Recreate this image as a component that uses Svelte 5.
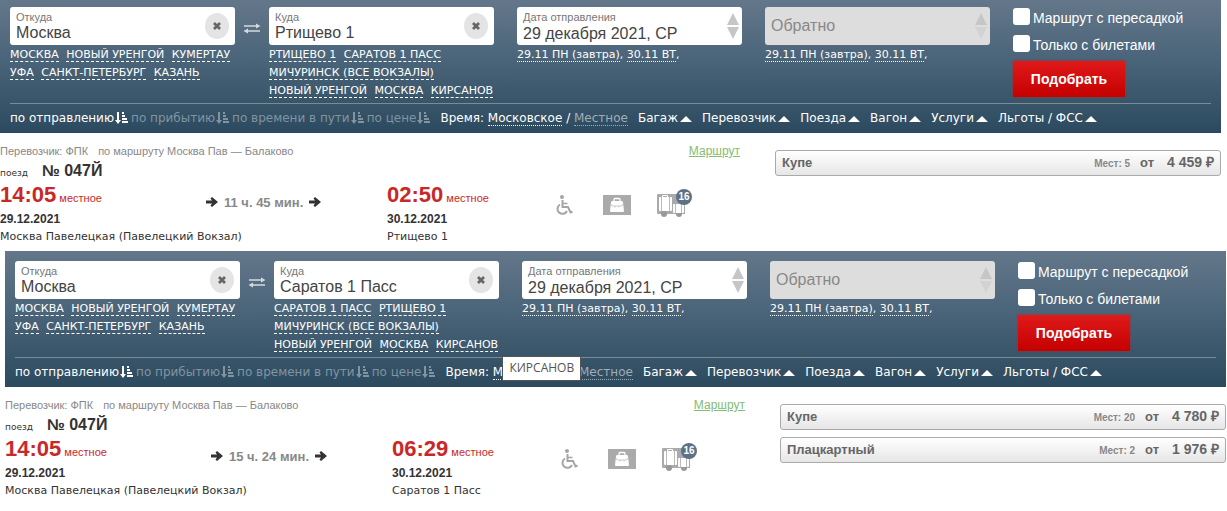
<script>
  const searches = [
    {
      id: 'rtishchevo',
      to: 'Ртищево 1',
      toHints: ['РТИЩЕВО 1', 'САРАТОВ 1 ПАСС', 'МИЧУРИНСК (ВСЕ ВОКЗАЛЫ)', 'НОВЫЙ УРЕНГОЙ', 'МОСКВА', 'КИРСАНОВ'],
      tooltip: '',
      duration: '11 ч. 45 мин.',
      arrival: '02:50',
      fares: [{ name: 'Купе', seats: 5, price: '4 459' }]
    },
    {
      id: 'saratov',
      to: 'Саратов 1 Пасс',
      toHints: ['САРАТОВ 1 ПАСС', 'РТИЩЕВО 1', 'МИЧУРИНСК (ВСЕ ВОКЗАЛЫ)', 'НОВЫЙ УРЕНГОЙ', 'МОСКВА', 'КИРСАНОВ'],
      tooltip: 'КИРСАНОВ',
      duration: '15 ч. 24 мин.',
      arrival: '06:29',
      fares: [
        { name: 'Купе', seats: 20, price: '4 780' },
        { name: 'Плацкартный', seats: 2, price: '1 976' }
      ]
    }
  ];
  const fromHints = ['МОСКВА', 'НОВЫЙ УРЕНГОЙ', 'КУМЕРТАУ', 'УФА', 'САНКТ-ПЕТЕРБУРГ', 'КАЗАНЬ'];
  const sorts = ['по отправлению', 'по прибытию', 'по времени в пути', 'по цене'];
  const filters = ['Багаж', 'Перевозчик', 'Поезда', 'Вагон', 'Услуги', 'Льготы / ФСС'];
</script>

{#snippet cityField(id, label, value, hints)}
  <div class="city">
    <div class="field">
      <label for={id}>{label}</label>
      <input type="text" {id} {value} />
      <button type="button" class="clear" aria-label="Очистить">
        <svg width="10" height="10" viewBox="0 0 10 10"><path d="M2 2L8 8M8 2L2 8" stroke="#666" stroke-width="2.8" /></svg>
      </button>
    </div>
    <div class="hints cities">
      {#each hints as hint}<a href="#city">{hint}</a>{' '}{/each}
    </div>
  </div>
{/snippet}

{#snippet dateHints()}
  <div class="hints dates"><a href="#date">29.11 ПН (завтра)</a>, <a href="#date">30.11 ВТ</a>,</div>
{/snippet}

{#snippet spinner()}
  <span class="spinner">
    <button type="button" aria-label="Следующий день"><svg width="12" height="12" viewBox="0 0 12 12"><path d="M6 0L12 12H0Z" fill="currentColor" /></svg></button>
    <button type="button" aria-label="Предыдущий день"><svg width="12" height="12" viewBox="0 0 12 12"><path d="M0 0H12L6 12Z" fill="currentColor" /></svg></button>
  </span>
{/snippet}

{#snippet arrow()}
  <svg class="arrow" width="12" height="10" viewBox="0 0 12 10"><path d="M0 3.500H6L4.500 1.500L6 0L12 5L6 10L4.500 8.500L6 6.500H0Z" fill="#333" /></svg>
{/snippet}

<main>
  {#each searches as s, i}
    <section class:shifted={i > 0}>
      <form class="panel" onsubmit={(e) => e.preventDefault()}>
        <div class="fields">
          <div class="route">
            {@render cityField(`${s.id}-from`, 'Откуда', 'Москва', fromHints)}
            <button type="button" class="swap" aria-label="Поменять местами">
              <svg width="18" height="11" viewBox="0 0 18 11" fill="none" stroke="#d3dae0" stroke-width="1.300">
                <path d="M1 3H15M4 8H17" /><path d="M13 .5L17.500 3L13 5.500ZM5 5.500L.5 8L5 10.500Z" fill="#d3dae0" stroke="none" />
              </svg>
            </button>
            {@render cityField(`${s.id}-to`, 'Куда', s.to, s.toHints)}
          </div>
          <div>
            <div class="field date">
              <label for="{s.id}-date">Дата отправления</label>
              <input type="text" id="{s.id}-date" value="29 декабря 2021, СР" />
              {@render spinner()}
            </div>
            {@render dateHints()}
          </div>
          <div>
            <div class="field back">
              <input type="text" placeholder="Обратно" aria-label="Обратно" />
              {@render spinner()}
            </div>
            {@render dateHints()}
          </div>
          <div class="options">
            <label><input type="checkbox" />Маршрут с пересадкой</label>
            <label><input type="checkbox" />Только с билетами</label>
            <button class="submit">Подобрать</button>
          </div>
        </div>

        <div class="toolbar">
          <div class="sorts">
            {#each sorts as sort, n}
              <button type="button" class:active={n === 0}>{sort}<svg width="13" height="12" viewBox="0 0 13 12" fill="currentColor"><path d="M2 0H4V8H6L3 12L0 8H2ZM7 0H9V2H7ZM7 3H10V5H7ZM7 6H12V8H7ZM7 9H13V11H7Z" /></svg></button>
            {/each}
          </div>
          <div class="time">Время: <a href="#msk">Московское</a> / <a class="local" href="#local">Местное</a>
            {#if s.tooltip}<span class="tooltip">{s.tooltip}</span>{/if}
          </div>
          <div class="filters">
            {#each filters as filter}
              <button type="button">{filter}<svg width="12" height="8" viewBox="0 0 12 8"><path d="M6 2L12 8H0Z" fill="#fff" /></svg></button>
            {/each}
          </div>
        </div>
      </form>

      <article class="result">
        <div class="train">
          <div class="carrier">
            <span>Перевозчик: ФПК</span><span>по маршруту Москва Пав — Балаково</span>
            <a href="#route">Маршрут</a>
          </div>
          <div class="number"><small>поезд</small><b>№ 047Й</b></div>
          <div class="trip">
            <div class="stop">
              <div class="clock"><b>14:05</b> местное</div>
              <div class="day">29.12.2021</div>
              <div class="station">Москва Павелецкая (Павелецкий Вокзал)</div>
            </div>
            <div class="duration">{@render arrow()}{s.duration}{@render arrow()}</div>
            <div class="stop">
              <div class="clock"><b>{s.arrival}</b> местное</div>
              <div class="day">30.12.2021</div>
              <div class="station">{s.to}</div>
            </div>
            <div class="services">
              <svg width="18" height="22" viewBox="0 0 18 22" fill="none" stroke="#a5a5a5" stroke-width="2">
                <circle cx="7" cy="3" r="2" fill="#a5a5a5" stroke="none" />
                <path d="M7.500 6V13H13L15.500 18.500L17.500 17.500" /><path d="M8 9.500H12.500" stroke-width="1.500" />
                <path d="M5 10.500A5 5 0 1 0 12 17" />
              </svg>
              <svg width="28" height="20" viewBox="0 0 28 20">
                <path d="M0 0H28V20H0Z" fill="#aaa" />
                <path d="M11 7V4.500Q11 3.500 12 3.500H16Q17 3.500 17 4.500V7" fill="none" stroke="#fff" stroke-width="1.300" />
                <path d="M9 6H19Q20 6 20 7.500L21 16Q21 17 20 17H8Q7 17 7 16L8 7.500Q8 6 9 6Z" fill="#fff" />
                <path d="M8 9Q8 11 10 11H18Q20 11 20 9M12 11V12.500M16 11V12.500" fill="none" stroke="#bbb" stroke-width=".8" />
              </svg>
              <span class="luggage">
                <svg width="29" height="23" viewBox="0 0 29 23">
                  <path d="M1 0H28V20H1Q0 20 0 19V1Q0 0 1 0Z" fill="#aaa" />
                  <circle cx="7" cy="20" r="3" fill="#999" /><circle cx="22" cy="20" r="3" fill="#999" />
                  <path d="M5.500 4V1.500H10.500V4" fill="none" stroke="#fff" />
                  <rect x="2" y="3" width="13" height="14" rx="1" fill="#fff" /><path d="M4.500 3V17M12.500 3V17" stroke="#bbb" />
                  <rect x="16" y="10" width="11" height="9" rx="1" fill="#fff" /><path d="M18.500 10V19M24.500 10V19" stroke="#bbb" />
                </svg>
                <span class="badge">16</span>
              </span>
            </div>
          </div>
        </div>
        <div class="fares">
          {#each s.fares as fare}
            <button class="fare"><span class="kind">{fare.name}</span><span class="seats">Мест: {fare.seats}</span><span>от</span><span class="price">{fare.price} ₽</span></button>
          {/each}
        </div>
      </article>
    </section>
  {/each}
</main>

<style>
  :global(body) { background: #fff; }
  main { font-family: "Liberation Sans", Arial, sans-serif; font-size: 12px; color: #333; overflow: hidden; }
  button { border: 0; padding: 0; margin: 0; background: none; font: inherit; color: inherit; cursor: pointer; }
  svg { display: block; flex: none; }
  section { padding-right: 6px; }
  section.shifted { padding: 0 1px 0 5px; }
  .panel { padding: 7px 10px 0; background: linear-gradient(#64778a, #4a6479 45%, #2c4a5f); color: #fff; }
  .shifted .panel { padding-top: 10px; }
  .fields { display: grid; grid-template-columns: 484fr 225fr 225fr 198fr; gap: 23px; height: 96px; }
  .route { display: grid; grid-template-columns: 1fr 34px 1fr; align-items: start; }
  .city, .fields > div { min-width: 0; }
  .field { position: relative; box-sizing: border-box; height: 38px; padding: 4px 6px 0; border-radius: 3px; background: #fff; display: flex; flex-direction: column; }
  .field label { font-size: 11px; line-height: 13px; color: #777; }
  .field input { width: 100%; box-sizing: border-box; border: 0; padding: 0; margin: 0; background: none; outline: 0; font: 16px/18px "Liberation Sans", Arial, sans-serif; color: #444; }
  .field.date input { line-height: 20px; }
  .field.back { background: #ddd; justify-content: center; padding-top: 0; }
  .back input::placeholder { color: #888; opacity: 1; }
  .clear { position: absolute; right: 6px; top: 6px; width: 24px; height: 26px; border-radius: 50%; background: #e4e4e4; display: grid; place-items: center; }
  .spinner { position: absolute; right: 3px; top: 6px; display: grid; gap: 2px; }
  .spinner button { color: #c6c6c6; }
  .back .spinner button:last-child { color: #d2d2d2; }
  .swap { height: 42px; display: grid; place-items: center; }
  .hints { padding-top: 1px; font: 11px/18px "DejaVu Sans", Verdana, sans-serif; white-space: nowrap; }
  .hints a { color: #fff; text-decoration: none; border-bottom: 1px dotted #fff; }
  .hints.cities { white-space: normal; margin-right: -8px; }
  .cities a { border-bottom-style: dashed; margin-right: 4px; white-space: nowrap; }
  .options { display: flex; flex-direction: column; align-items: flex-start; }
  .options label { display: flex; align-items: flex-start; gap: 3px; height: 27px; font-size: 14px; line-height: 22px; white-space: nowrap; }
  .options input { appearance: none; width: 17px; height: 17px; margin: 1px 0 0; border-radius: 3px; background: #fff; }
  .submit { width: 112px; height: 36px; background: linear-gradient(#e01a1a, #c40000); font-size: 14px; font-weight: bold; box-shadow: 0 0 2px #b22; }
  .toolbar { display: flex; align-items: center; gap: 10px; box-sizing: border-box; height: 30px; padding-bottom: 2px; border-top: 1px solid #7b8b97; font: 12px/16px "DejaVu Sans", Verdana, sans-serif; white-space: nowrap; }
  .toolbar button { display: flex; align-items: center; gap: 1px; }
  .sorts { display: flex; gap: 3px; color: #8094a2; }
  .sorts .active { color: #fff; }
  .time { position: relative; }
  .time a { color: #fff; text-decoration: none; border-bottom: 1px dotted #fff; }
  .time a.local { color: #a0adb7; border-color: #a0adb7; }
  .tooltip { position: absolute; left: 57px; top: -8px; padding: 2px 6px 3px; border: 1px solid #555; background: #fff; color: #555; font: 12px/18px "Open Sans", sans-serif; }
  .filters { display: flex; gap: 10px; }
  .filters button { gap: 2px; }
  .result { display: grid; grid-template-columns: 775fr 446fr; height: 118px; }
  .train { padding-top: 10px; }
  .carrier { display: flex; gap: 10px; padding-right: 35px; font-size: 11px; line-height: 17px; color: #888; }
  .carrier a { margin-left: auto; font-size: 12px; color: #83bd72; }
  .number { display: flex; align-items: baseline; gap: 14px; height: 22px; line-height: 22px; }
  .number small { font: 9px/12px "DejaVu Sans", Verdana, sans-serif; }
  .number b { font-size: 16px; }
  .trip { display: grid; grid-template-columns: 206fr 181fr 168fr 220fr; white-space: nowrap; }
  .stop { min-width: 0; }
  .clock { height: 28px; color: #c92828; font-size: 11px; line-height: 25px; }
  .clock b { font-size: 22px; }
  .day { font-weight: bold; line-height: 18px; }
  .station { font: 11px/18px "DejaVu Sans", Verdana, sans-serif; }
  .duration { display: flex; align-items: center; gap: 6px; height: 40px; font-size: 13px; font-weight: bold; color: #888; }
  .services { display: flex; align-items: center; gap: 26px; height: 46px; }
  .services > svg:first-child { margin-right: 4px; }
  .luggage { position: relative; }
  .badge { position: absolute; right: -6px; top: -5px; width: 16px; height: 16px; border-radius: 50%; background: #5c7185; color: #fff; font: bold 10px/16px "Liberation Sans", sans-serif; text-align: center; }
  .fares { display: flex; flex-direction: column; gap: 7px; padding-top: 17px; }
  .fare { display: flex; align-items: baseline; gap: 10px; box-sizing: border-box; height: 26px; padding: 0 6px; border: 1px solid #aaa; border-radius: 3px; background: linear-gradient(#fff, #e6e6e6); color: #666; font-size: 13px; font-weight: bold; line-height: 22px; }
  .kind { margin-right: auto; }
  .seats { font-size: 10px; color: #888; }
  .price { margin-left: 3px; font-size: 14px; }
</style>
